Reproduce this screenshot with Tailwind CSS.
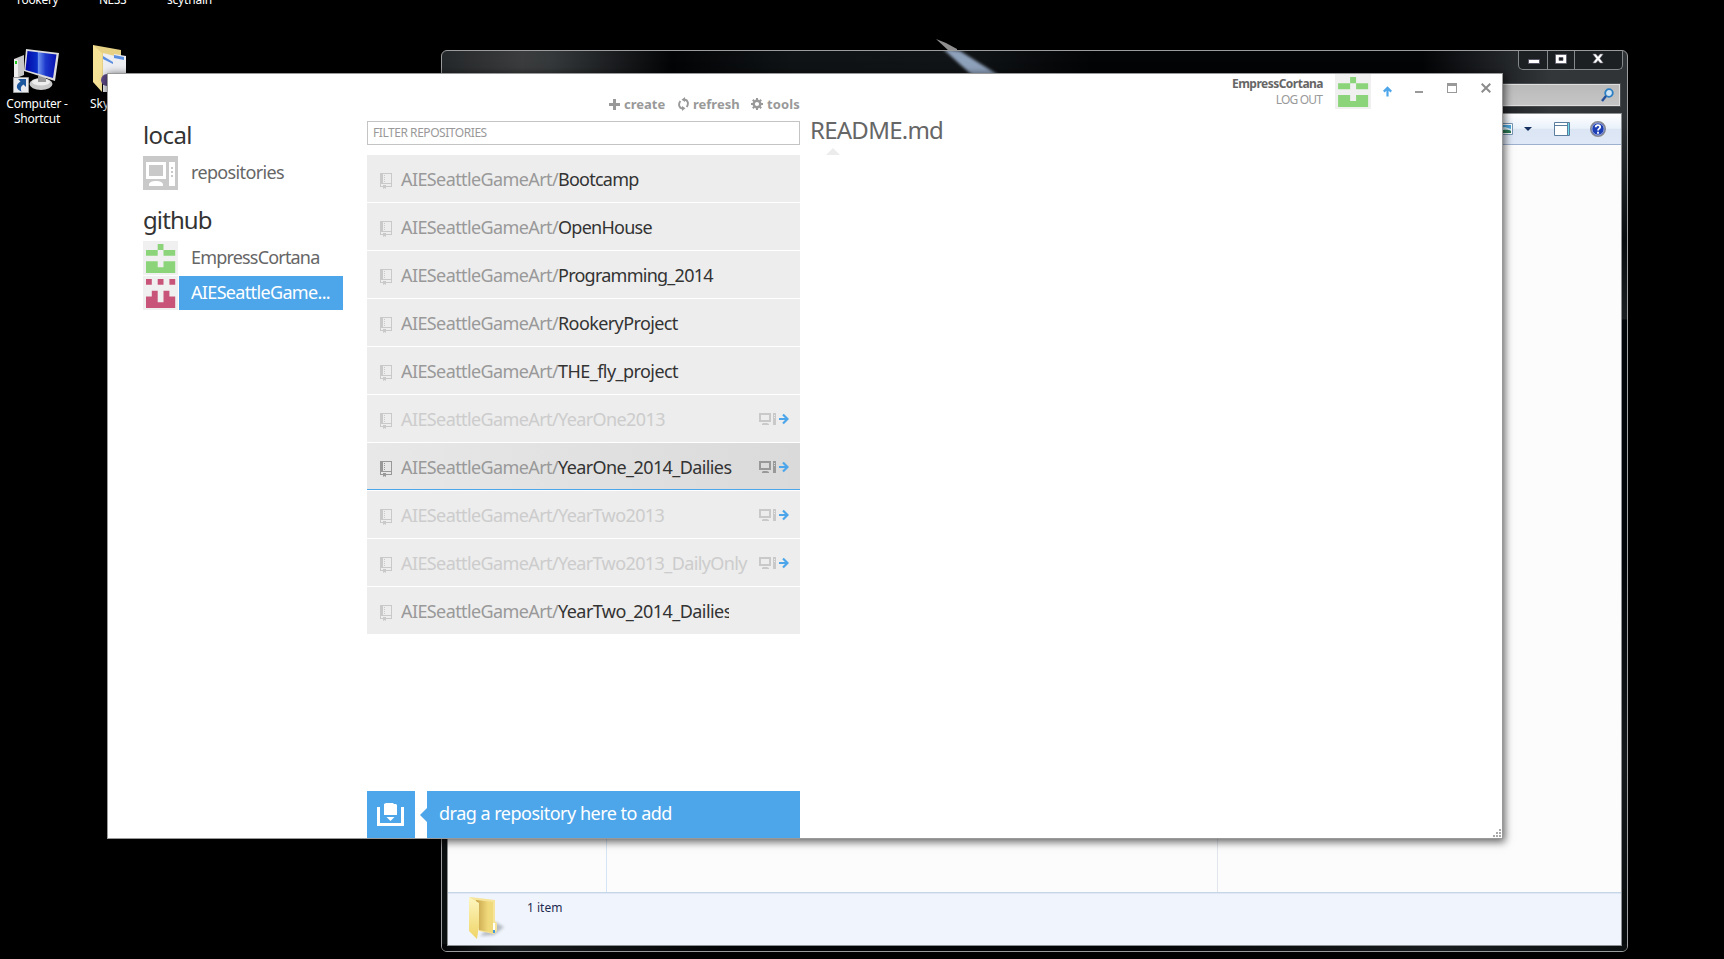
<!DOCTYPE html>
<html lang="en">
<head>
<meta charset="utf-8">
<title>Desktop</title>
<script src="https://cdn.jsdelivr.net/npm/@tailwindcss/browser@4"></script>
</head>
<body class="relative h-[959px] w-[1724px] overflow-hidden bg-black font-['Noto_Sans','Open_Sans',sans-serif]">

<!-- shared symbols -->
<svg class="absolute h-0 w-0">
  <symbol id="green" viewBox="0 0 35 34"><path fill="#f0f0f0" d="M0 0h35v34H0z"/><path fill="#8bd47a" d="M14.700 3h5.800v6h11.700v5.800h-11.700V9h-5.800v5.800H3V9h11.700zM3 20.300h11.700v5.900h5.800v-5.900h11.700V32H3z"/></symbol>
  <symbol id="red" viewBox="0 0 35 34"><path fill="#f0f0f0" d="M0 0h35v34H0z"/><path fill="#c95479" d="M3 3h5.800v5.700H3zM14.700 3h5.800v5.700h-5.800zM26.400 3h5.800v5.700h-5.800zM3 20.500h5.800v-5.700h5.900v11.500h5.800V14.800h5.900v5.700h5.800V32H3z"/></symbol>
  <symbol id="book" viewBox="0 0 12 16"><path fill="currentColor" fill-rule="evenodd" d="M0 0h12v14H6v2l-1.500-1L3 16v-2H0zM3 1v9h8V1zM1 11v2h2v-1h3v1h5v-2z"/><path fill="currentColor" d="M4 2h1v1H4zM4 4h1v1H4zM4 6h1v1H4zM4 8h1v1H4z"/></symbol>
  <symbol id="pc" viewBox="0 0 30 13"><path fill="currentColor" fill-rule="evenodd" d="M0 0h12v9H0zM2 2v5h8V2zM4 10h4l2 1v1H3v-1zM14 0h3v12h-3zM15 2v1h1V2zM15 4v1h1V4z"/><path fill="none" stroke="#4ea6ea" stroke-width="2.200" d="M20 6h9M24 1.500l4.500 4.500-4.500 4.500"/></symbol>
</svg>

<!-- desktop labels and icons -->
<div class="absolute left-[17px] top-[-8px] flex text-[12px] leading-4 text-white">
  <span class="w-[82px] tracking-[-0.3px]">rookery</span><span class="w-[68px] tracking-[-0.5px]">NESS</span><span class="tracking-[-0.2px]">scythain</span>
</div>
<div class="absolute left-0 top-[46px] flex w-[74px] flex-col items-center text-center text-[12px] leading-[15px] tracking-[-0.25px] text-white">
  <svg class="h-[50px] w-[50px]" viewBox="12 46 50 50">
    <defs><linearGradient id="scr"><stop offset="0" stop-color="#0008a8"/><stop offset=".38" stop-color="#0a30c8"/><stop offset=".42" stop-color="#6a90ee"/><stop offset=".65" stop-color="#1c38cc"/><stop offset="1" stop-color="#0710b0"/></linearGradient></defs>
    <path fill="#c8c8c8" d="M14 59l10-4v20l-10 4z"/><path fill="#eee" d="M14 59l4 1v18l-4 2z"/><path fill="#2c2" d="M15 61h2v3h-2z"/>
    <ellipse cx="41" cy="84" rx="11.500" ry="6" fill="#c9c9c9"/><ellipse cx="41" cy="82" rx="9" ry="3.500" fill="#eee"/><path fill="#999" d="M38 76h8v6h-8z"/>
    <path fill="#dcdcdc" d="M26 49l33 4-4 28-31-10z"/><path fill="url(#scr)" d="M27.500 51l29 3.500-3.500 23.500-27.500-8z"/>
    <path fill="#e8eaee" stroke="#999" d="M13.500 77.500h15v15h-15z"/><path fill="#1c579e" d="M18 79h8v8l-2.500-2.500c-3 2-3 4-2 7-6-2-6-7-1-10z"/>
  </svg>
  <span>Computer -<br>Shortcut</span>
</div>
<svg class="absolute left-[90px] top-[44px] h-[50px] w-[38px]" viewBox="90 44 38 50"><path fill="#e6d184" d="M93 45l28 5v30H93z"/><path fill="#eceef2" d="M103 53l12 3v36h-12zM114 54l12 2v34h-12z"/><path fill="#5a8ee0" d="M103 56l10 6v2l-10-5zM114 55l10 2v3l-10-2z"/><path fill="#f6e296" d="M93 45l9 8v39l-9-10z"/><circle cx="107" cy="80" r="6" fill="#5d4a88"/></svg>
<span class="absolute left-[90px] top-[96px] text-[12px] leading-4 text-white">Sky</span>
<svg class="absolute left-[930px] top-[36px] h-4 w-8" viewBox="930 36 32 16"><path fill="#8f8f8f" d="M936 39l10 4 11 6v2h-8z"/></svg>

<!-- file explorer window -->
<section class="absolute left-[441px] top-[50px] flex h-[902px] w-[1187px] flex-col overflow-hidden rounded-[6px] border border-[#9b9c9d] bg-[linear-gradient(90deg,#25282a_0,#3a3c3d_80px,#35383a_110px,#020406_230px,#101315_350px,#111416_520px,#020406_650px,#020406_980px,#34373a_1110px,#303335_1185px)]">
  <svg class="absolute left-[490px] top-0 h-6 w-[90px]" viewBox="932 51 90 24"><defs><filter id="soft"><feGaussianBlur stdDeviation="1.800"/></filter></defs><path fill="#8fa2bc" filter="url(#soft)" d="M943 49l17 2 40 25h-27z"/></svg>
  <div class="absolute right-0 top-[60px] h-[840px] w-[7px] bg-[linear-gradient(#303335,#080b0d_130px,#1c1f21_208px,#010408_209px,#010408_450px,#14181a_650px,#080b0c)]"></div>
  <div class="absolute bottom-0 left-0 h-[840px] w-[7px] bg-[#0c0f10]"></div>
  <div class="absolute bottom-0 left-0 h-[7px] w-full bg-[linear-gradient(90deg,#020405,#1a1d1f_60px,#020405_280px,#020405_700px,#191c1e_1000px,#0c0f10)]"></div>
  <div class="relative flex h-[19px] justify-end pr-[4px]">
    <div class="flex w-[105px] rounded-b-[5px] border border-t-0 border-[#85888a] bg-[#1d2022]">
      <div class="flex w-[29px] items-center justify-center border-r border-[#85888a]"><i class="mt-[3px] ml-[2px] h-[5px] w-3 rounded-[1px] border border-[#555565] bg-white"></i></div>
      <div class="flex w-[27px] items-center justify-center border-r border-[#85888a]"><svg class="mb-[2px] h-[10px] w-[12px]" viewBox="0 0 12 10"><path fill="#fff" stroke="#555565" stroke-width=".7" fill-rule="evenodd" d="M.5.500h11v9H.5zM4 3.500v3h4v-3z"/></svg></div>
      <div class="flex flex-1 items-center justify-center"><svg class="mb-[3px] mr-px h-[11px] w-3" viewBox="0 0 12 11"><path fill="#fff" stroke="#666676" stroke-width=".6" d="M.8 1h3L6 3.500 8.200 1h3L7.900 5.500l3.300 4.500h-3L6 7.500 3.800 10h-3l3.300-4.500z"/></svg></div>
    </div>
  </div>
  <div class="relative ml-auto mr-[7px] mt-[14px] flex h-[22px] w-[300px] items-center justify-end border border-[#dedede] bg-linear-to-b from-[#b9bab9] to-[#c5c5c5] pr-[5px] outline outline-[#4b4e50]">
    <svg class="h-[14px] w-[13px]" viewBox="0 0 13 14"><circle cx="8" cy="5" r="3.800" fill="#cfe4f5" stroke="#2a7fc4" stroke-width="1.800"/><path stroke="#24509c" stroke-width="2.400" d="M5 8l-4 5"/></svg>
  </div>
  <div class="relative mx-[6px] mb-[6px] mt-auto flex h-[831px] flex-col bg-[#fcfcfc] outline outline-[#8d9092]">
    <div class="flex h-[31px] items-center justify-end border-b border-[#9db1cf] bg-[linear-gradient(#fff,#e9f1fa_48%,#dbe5f3_50%,#dee8f6)] pr-[15px]">
      <svg class="mr-[11px] h-[12px] w-[18px]" viewBox="0 0 18 12"><path fill="#fff" stroke="#7796b4" d="M.5.500h17v11H.5z"/><path fill="#4eaae0" d="M2 2h14v8H2z"/><path fill="#d9f0f6" d="M2 5l8-1 6 2v2H2z"/><path fill="#297c57" d="M2 10V7c4 2 8-2 14 1v2z"/></svg>
      <svg class="mr-[22px] h-[4px] w-[8px]" viewBox="0 0 8 4"><path fill="#16305f" d="M0 0h8L4 4z"/></svg>
      <svg class="mr-[20px] h-[14px] w-[16px]" viewBox="0 0 16 14"><path fill="#fff" stroke="#5c7e9e" d="M.5.500h15v13H.5z"/><path stroke="#5c7e9e" d="M1 3.500h12M13.500 1v12"/><path stroke="#6edaea" d="M14.500 1v12"/></svg>
      <svg class="h-4 w-4" viewBox="0 0 16 16"><circle cx="8" cy="8" r="7.300" fill="#1d3fb5" stroke="#8b8b90" stroke-width="1.400"/><circle cx="8" cy="8" r="6.100" fill="none" stroke="#d9dde8" stroke-width=".7"/><path fill="none" stroke="#fff" stroke-width="1.800" d="M5.700 6.200C5.700 3.400 10.200 3.500 10.200 6c0 1.700-2.200 1.600-2.200 3.500M8 10.800v2"/></svg>
    </div>
    <div class="flex flex-1">
      <div class="w-[159px] border-r border-[#d6e5f5]"></div><div class="w-[611px] border-r border-[#e0e6ec]"></div>
    </div>
    <div class="flex h-[53px] border-t border-[#c5d6e9] bg-[#f0f4fc] pl-[18px] shadow-[inset_0_1px_#dfe8f4]">
      <svg class="mt-[3px] h-[46px] w-[44px]" viewBox="0 0 44 46">
        <defs><linearGradient id="fa" x2="0" y2="1"><stop stop-color="#fdf6c0"/><stop offset="1" stop-color="#efd467"/></linearGradient><linearGradient id="fb"><stop stop-color="#c7a24a"/><stop offset=".7" stop-color="#f0d97a"/></linearGradient><filter id="fs"><feGaussianBlur stdDeviation="1.500"/></filter></defs>
        <path fill="#8d929c" opacity=".6" filter="url(#fs)" d="M14 40l15-14 9 5-10 8z"/>
        <path fill="#f5e49a" d="M4 1l25 3v21l2 2v8l-3 3-15-3z"/><path fill="url(#fb)" d="M10 4l17 2v31l-14-3z"/><path fill="url(#fa)" d="M3 1l10 6v23l-2 13-8-8z"/><path fill="#fff" d="M27 27h2v8h-2z"/><path fill="#4599dd" d="M27 34h2v3h-2z"/>
      </svg>
      <span class="mt-[6px] ml-[17px] text-[12px] leading-[18px] text-[#1e2b50]">1 item</span>
    </div>
  </div>
</section>

<!-- repository manager window -->
<main class="absolute left-[107px] top-[73px] flex h-[766px] w-[1396px] border border-[#999] bg-white text-[18px] text-[#666] shadow-[1px_2px_8px_1px_rgba(0,0,0,0.6)]">
  <aside class="w-[235px] shrink-0 pl-[35px] pt-[45px]">
    <h2 class="text-[24px] leading-8 tracking-[-0.6px] text-[#333]">local</h2>
    <div class="mt-[5px] flex h-[34px]">
      <svg class="h-[34px] w-[35px]" viewBox="0 0 35 34"><path fill="#c9c9c9" d="M0 0h35v34H0z"/><path fill="#fff" fill-rule="evenodd" d="M3 6h20v17H3zM6 9v11h14V9zM6 29c0-3 3-4 7-4s7 1 7 4v1H6zM26 6h6v24h-6zM28 11v2h2v-2zM28 15v2h2v-2zM28 19v2h2v-2z"/></svg>
      <span class="ml-[13px] leading-8 tracking-[-0.65px]">repositories</span>
    </div>
    <h2 class="mt-[14px] text-[24px] leading-8 tracking-[-0.9px] text-[#333]">github</h2>
    <div class="mt-[5px] flex h-[34px]"><svg class="h-[34px] w-[35px]"><use href="#green"/></svg><span class="ml-[13px] leading-8 tracking-[-0.82px]">EmpressCortana</span></div>
    <div class="mt-px flex h-[34px]"><svg class="h-[34px] w-[35px]"><use href="#red"/></svg><span class="ml-px w-[164px] bg-[#4ea6ea] pl-[12px] leading-8 tracking-[-0.66px] text-white">AIESeattleGame...</span></div>
  </aside>

  <section class="ml-[24px] flex w-[433px] shrink-0 flex-col pt-[20px]">
    <nav class="flex h-5 items-center justify-end text-[13px] font-bold leading-5 text-[#999]">
      <svg class="mr-[4px] h-[11px] w-[11px]" viewBox="0 0 11 11"><path fill="currentColor" d="M4 0h3v4h4v3H7v4H4V7H0V4h4z"/></svg><span class="w-[42px]">create</span>
      <svg class="ml-[12px] mr-[4px] h-[14px] w-[11px]" viewBox="0 0 11 14"><path fill="none" stroke="currentColor" stroke-width="1.900" d="M6.500 2.500C10 3 11 7 8.600 10M4.500 11.500C1 11 0 7 2.400 4"/><path fill="currentColor" d="M7 0v5L3.500 2.700zM4 14V9l3.500 2.300z"/></svg><span class="w-[47px]">refresh</span>
      <svg class="ml-[11px] mr-[4px] h-3 w-3" viewBox="0 0 12 12"><circle cx="6" cy="6" r="3.300" fill="none" stroke="currentColor" stroke-width="2.400"/><path stroke="currentColor" stroke-width="2" d="M6 0v2M6 10v2M0 6h2M10 6h2M1.800 1.800l1.400 1.400M8.800 8.800l1.400 1.400M1.800 10.200l1.400-1.400M8.800 3.200l1.400-1.400"/></svg><span class="w-[33px] tracking-[0.15px]">tools</span>
    </nav>
    <div class="mt-[7px] h-6 border border-[#c4c4c4] pl-[5px] text-[12px] leading-[21px] tracking-[-0.45px] text-[#999]">FILTER REPOSITORIES</div>
    <ul id="repos" class="mt-[10px] flex flex-col gap-px"></ul>
    <div class="mt-auto flex h-[47px] text-white">
      <div class="flex w-12 bg-[#4ea6ea] pl-[10px] pt-[12px]"><svg class="h-[23px] w-[27px]" viewBox="0 0 27 23"><path fill="#fff" d="M0 4h3v16h21V4h3v19H0zM7 1l2-1h7l1 1h2l1 1v10H7zM9.500 14h8L13.500 18z"/></svg></div>
      <svg class="ml-[5px] mt-[17px] h-[14px] w-[7px]" viewBox="0 0 7 14"><path fill="#4ea6ea" d="M7 0v14L0 7z"/></svg>
      <div class="flex-1 bg-[#4ea6ea] pl-[12px] leading-[45px] tracking-[-0.5px]">drag a repository here to add</div>
    </div>
  </section>

  <section class="flex min-w-0 flex-1 flex-col">
    <header class="flex h-[40px] justify-end text-[12px]">
      <div class="mr-[12px] flex flex-col items-end pt-[2px] leading-4">
        <b class="tracking-[-0.52px]">EmpressCortana</b><span class="mr-[1px] tracking-[-0.85px] text-[#999]">LOG OUT</span>
      </div>
      <svg class="h-[35px] w-[36px]" viewBox="0 0 35 34" preserveAspectRatio="none"><use href="#green"/></svg>
      <svg class="ml-[12px] mt-[12px] h-[11px] w-[9px]" viewBox="0 0 9 11"><path fill="none" stroke="#4ea6ea" stroke-width="2.200" d="M4.500 10.500V2M.8 5.600l3.700-3.700 3.700 3.700"/></svg>
      <i class="ml-[23px] mt-[17px] h-[2px] w-2 bg-[#999]"></i>
      <i class="ml-[24px] mt-[9px] h-[10px] w-[10px] border border-t-3 border-[#999]"></i>
      <svg class="ml-[24px] mr-[11px] mt-[9px] h-[10px] w-[10px]" viewBox="0 0 10 10"><path stroke="#8c8c8c" stroke-width="2" d="M.7.700l8.600 8.600M9.300.7L.7 9.300"/></svg>
    </header>
    <h1 class="pl-[10px] text-[24px] leading-8 tracking-[-0.75px]">README.md</h1>
    <svg class="ml-[26px] mt-[2px] h-[7px] w-[14px]" viewBox="0 0 14 7"><path fill="#ececec" d="M7 0l7 7H0z"/></svg>
    <svg class="ml-auto mr-px mt-auto mb-px h-2 w-2" viewBox="0 0 8 8"><path fill="#aaa" d="M6 0h2v2H6zM3 3h2v2H3zM6 3h2v2H6zM0 6h2v2H0zM3 6h2v2H3zM6 6h2v2H6z"/></svg>
  </section>
</main>

<script>
const repos = [
  ['Bootcamp', 'tight'], ['OpenHouse', 'tight'], ['Programming_2014', 'tight'], ['RookeryProject'], ['THE_fly_project', 'clipped'],
  ['YearOne2013', 'dim'], ['YearOne_2014_Dailies', 'selected'], ['YearTwo2013', 'dim'],
  ['YearTwo2013_DailyOnly', 'dim'], ['YearTwo_2014_Dailies', 'clipped']
];
const row = { selected: 'bg-linear-to-r from-[#e8e8e8] to-[#dadada] border-b border-[#4ea6ea] h-[47px]' };
const spacing = { tight: 'tracking-[-0.75px]', clipped: 'tracking-[-0.55px]' };
document.getElementById('repos').innerHTML = repos.map(([name, state]) => {
  const dim = state === 'dim', sel = state === 'selected';
  return `<li class="flex pl-[13px] pr-[11px] ${row[state] || 'bg-[#ededed] h-[47px]'}">
    <svg class="mt-[18px] h-4 w-3 shrink-0 ${sel ? 'text-[#999]' : 'text-[#c9c9c9]'}"><use href="#book"/></svg>
    <span class="ml-[9px] flex whitespace-nowrap leading-[48px] h-[46px] ${state === 'clipped' ? 'w-[328px] overflow-hidden' : ''}"><span class="w-[157px] shrink-0 tracking-[-0.6px] ${dim ? 'text-[#ccc]' : 'text-[#999]'}">AIESeattleGameArt/</span><span class="${spacing[state] || 'tracking-[-0.6px]'} ${dim ? 'text-[#ccc]' : 'text-[#333]'}">${name}</span></span>
    ${dim || sel ? `<svg class="ml-auto mt-[18px] h-[13px] w-[30px] shrink-0 ${sel ? 'text-[#999]' : 'text-[#c9c9c9]'}"><use href="#pc"/></svg>` : ''}
  </li>`;
}).join('');
</script>
</body>
</html>
